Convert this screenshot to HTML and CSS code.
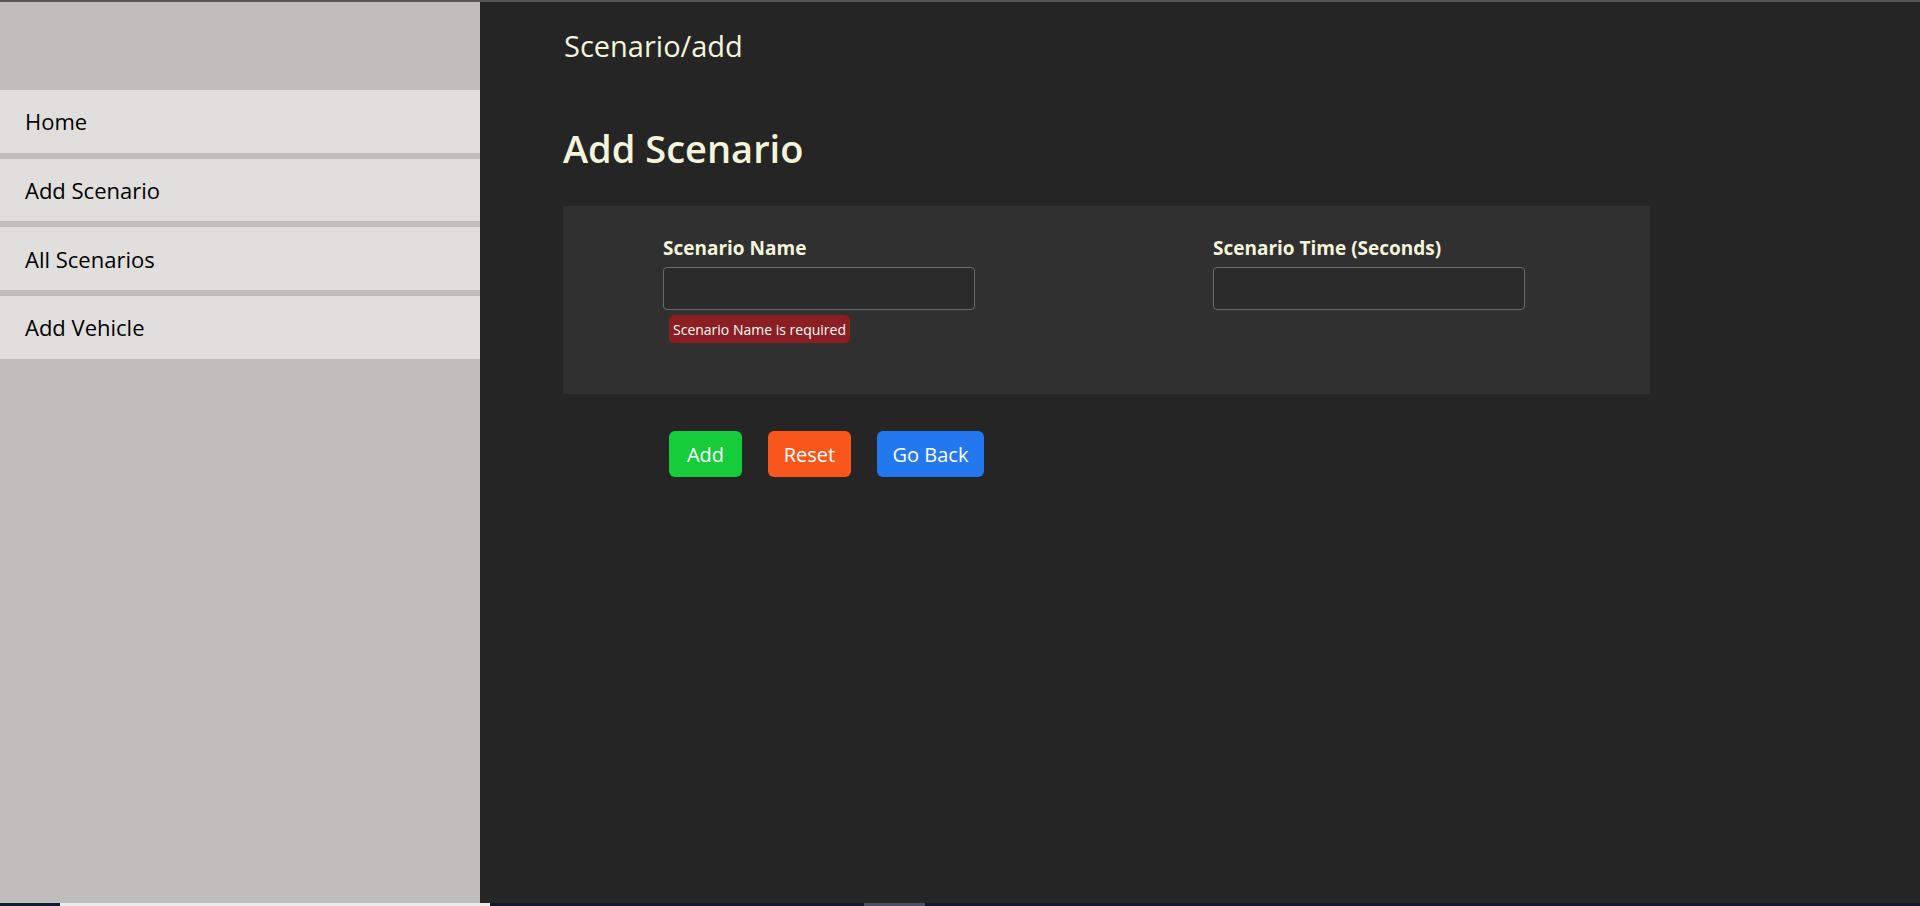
FILE: index.html
```html
<!DOCTYPE html>
<html lang="en">
<head>
<meta charset="utf-8">
<title>Scenario/add</title>
<link rel="stylesheet" href="styles.css">
</head>
<body>
<div class="topline"></div>
<div class="app">
  <aside class="sidebar">
    <div class="sidebar-head"></div>
    <nav class="nav">
      <a class="nav-item" href="#">Home</a>
      <a class="nav-item" href="#">Add Scenario</a>
      <a class="nav-item" href="#">All Scenarios</a>
      <a class="nav-item" href="#">Add Vehicle</a>
    </nav>
  </aside>
  <main class="main">
    <div class="crumb">Scenario/add</div>
    <h1 class="title">Add Scenario</h1>
    <form class="panel">
      <div class="field">
        <label class="label">Scenario Name</label>
        <input class="input" type="text">
        <span class="error">Scenario Name is required</span>
      </div>
      <div class="field">
        <label class="label">Scenario Time (Seconds)</label>
        <input class="input" type="text">
      </div>
    </form>
    <div class="actions">
      <button class="btn btn-add" type="button">Add</button>
      <button class="btn btn-reset" type="button">Reset</button>
      <button class="btn btn-back" type="button">Go Back</button>
    </div>
  </main>
</div>
<div class="taskbar">
  <span class="tb-seg tb-navy1"></span>
  <span class="tb-seg tb-white"></span>
  <span class="tb-seg tb-navy2"></span>
  <span class="tb-seg tb-gray"></span>
  <span class="tb-seg tb-navy3"></span>
</div>
</body>
</html>
```

FILE: styles.css
```css
* { box-sizing: border-box; }
html, body {
  margin: 0;
  padding: 0;
  width: 1920px;
  height: 906px;
  overflow: hidden;
  font-family: "Open Sans", "Noto Sans", sans-serif;
  background: #252525;
}
.topline {
  height: 2px;
  background: #565656;
}
.app {
  display: flex;
  height: 901px;
}
.sidebar {
  width: 480px;
  flex: none;
  background: #bfbebc;
}
.sidebar-head {
  height: 88px;
}
.nav {
  display: flex;
  flex-direction: column;
  gap: 6px;
}
.nav-item {
  display: flex;
  align-items: center;
  height: 62.67px;
  padding-left: 25px;
  background: #e0dfdd;
  color: #000;
  text-decoration: none;
  font-size: 22px;
}
.main {
  flex: 1;
  padding-left: 83px;
  color: #f5f5dc;
}
.crumb {
  font-size: 29px;
  line-height: 40px;
  margin: 24px 0 0 1px;
}
.title {
  font-size: 38px;
  font-weight: 600;
  line-height: 52px;
  margin: 56px 0 0 0;
}
.panel {
  width: 1087px;
  height: 188px;
  margin-top: 32px;
  background: #303030;
  display: grid;
  grid-template-columns: 550px 1fr;
  align-items: start;
  padding: 29px 0 0 100px;
}
.field {
  display: flex;
  flex-direction: column;
  align-items: flex-start;
}
.label {
  font-size: 19px;
  font-weight: 700;
  line-height: 26px;
  color: #f5f5dc;
}
.input {
  margin-top: 6px;
  width: 312px;
  height: 43px;
  background: #2a2a2a;
  border: 1px solid #6b6b6b;
  border-radius: 4px;
  color: #fff;
  font: inherit;
}
.error {
  margin: 5px 0 0 6px;
  height: 28px;
  padding: 0 4px;
  display: flex;
  align-items: center;
  background: #8b1e20;
  color: #fff;
  font-size: 14px;
  border-radius: 5px;
}
.actions {
  display: flex;
  gap: 26px;
  padding-left: 106px;
  margin-top: 37px;
}
.btn {
  height: 46px;
  border: none;
  border-radius: 6px;
  color: #fff;
  font-family: inherit;
  font-size: 20px;
  padding: 0;
  white-space: nowrap;
}
.btn-add { background: #16cc3b; width: 73px; }
.btn-reset { background: #f8561b; width: 83px; }
.btn-back { background: #2378f0; width: 107px; }
.taskbar {
  display: flex;
  height: 3px;
}
.tb-seg { display: block; height: 3px; }
.tb-navy1 { width: 60px; background: #0f1a33; }
.tb-white { width: 430px; background: #ececec; }
.tb-navy2 { width: 374px; background: #0e1835; }
.tb-gray { width: 61px; background: #4a5068; }
.tb-navy3 { flex: 1; background: #0e1835; }
```
